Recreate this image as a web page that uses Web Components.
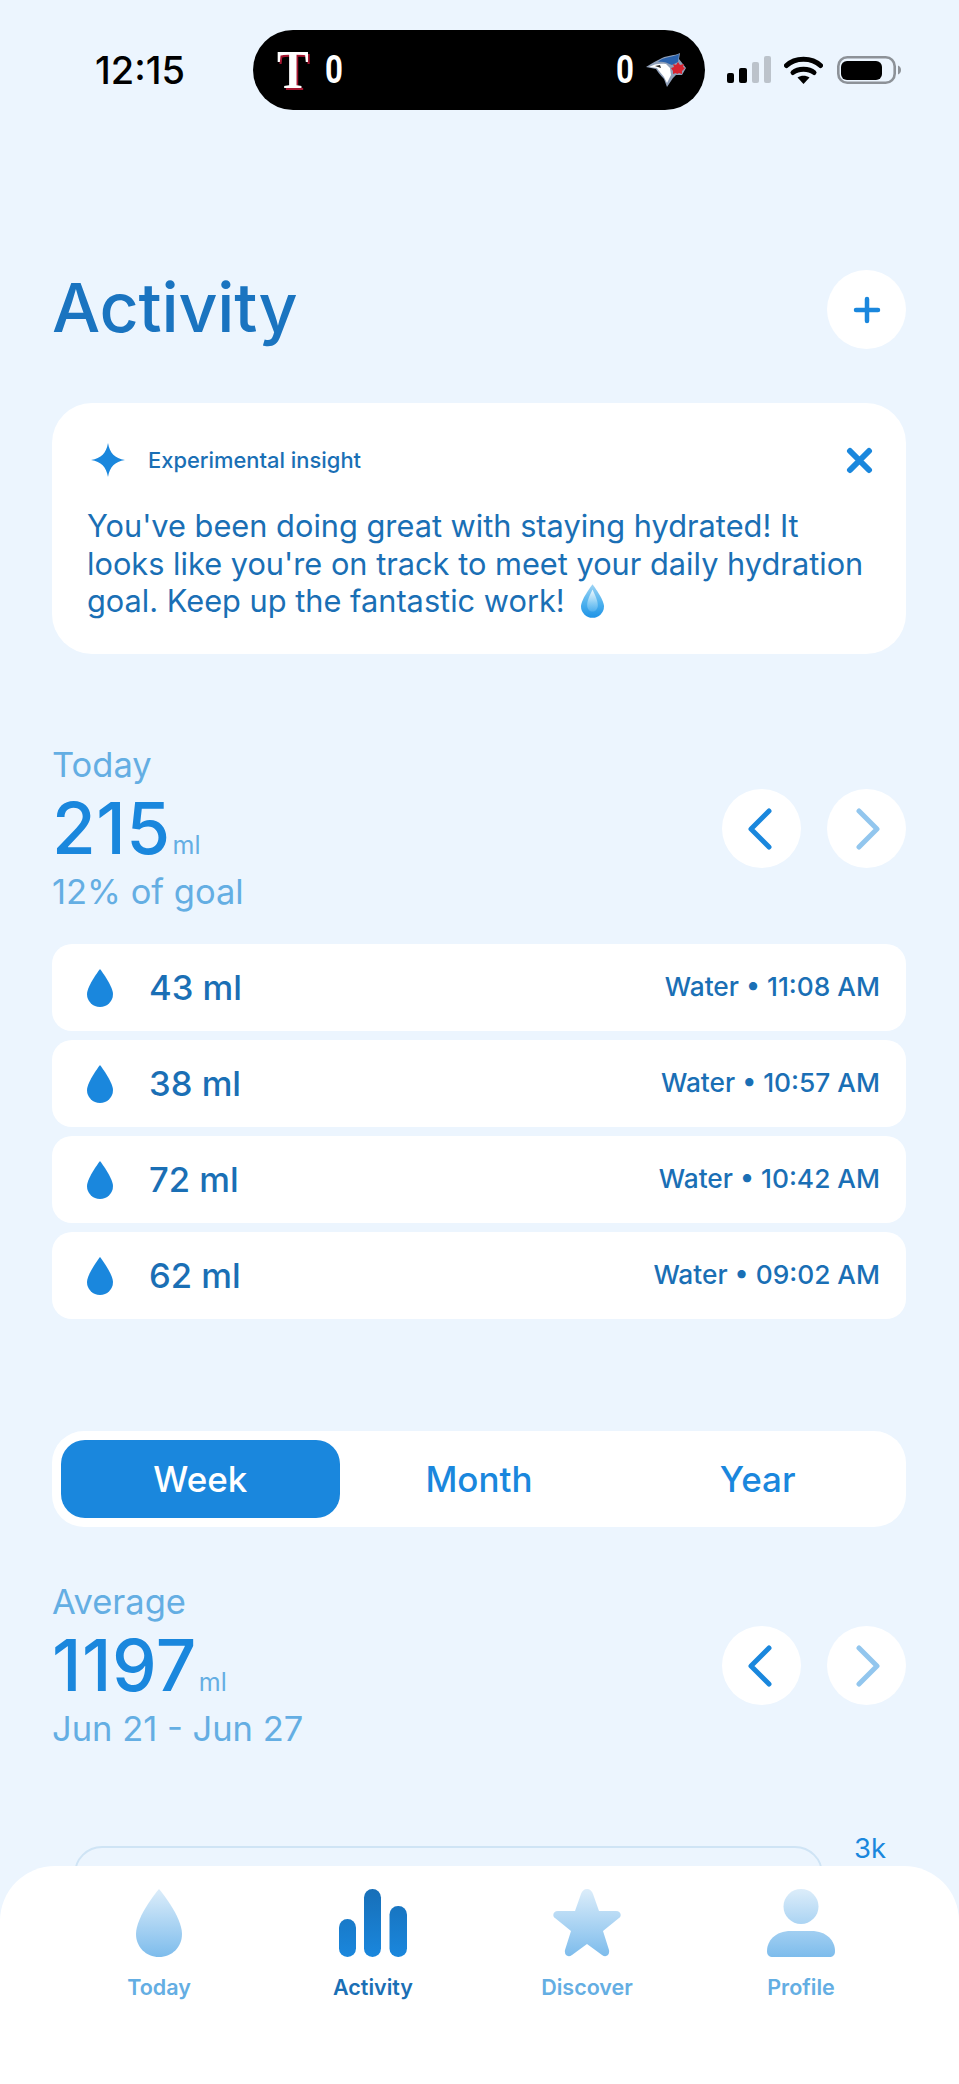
<!DOCTYPE html>
<html lang="en">
<head>
<meta charset="utf-8">
<title>Activity</title>
<style>
  html, body { margin: 0; background: #ecf5fe; }
  body { height: 2084px; overflow: hidden; font-family: Inter, "Liberation Sans", sans-serif; color: #1a6fb5; }
</style>
</head>
<body>
<activity-page>
  <status-bar></status-bar>
  <page-title>Activity</page-title>
  <insight-card>You've been doing great with staying hydrated! It looks like you're on track to meet your daily hydration goal. Keep up the fantastic work! </insight-card>
  <stat-block class="today" label="Today" value="215" unit="ml" note="12% of goal"></stat-block>
  <intake-list>
    <intake-row amount="43 ml" info="Water • 11:08 AM"></intake-row>
    <intake-row amount="38 ml" info="Water • 10:57 AM"></intake-row>
    <intake-row amount="72 ml" info="Water • 10:42 AM"></intake-row>
    <intake-row amount="62 ml" info="Water • 09:02 AM"></intake-row>
  </intake-list>
  <range-tabs></range-tabs>
  <stat-block class="average" label="Average" value="1197" unit="ml" note="Jun 21 - Jun 27"></stat-block>
  <chart-stub></chart-stub>
</activity-page>
<tab-bar></tab-bar>

<script>
// Iconos que se repiten en varios componentes
const GOTA = 'M13 0C13 0 0 17 0 25a13 13 0 0 0 26 0C26 17 13 0 13 0Z';

function crear(nombre, html) {
  customElements.define(nombre, class extends HTMLElement {
    constructor() {
      super();
      this.attachShadow({mode: 'open'});
    }
    connectedCallback() {
      this.shadowRoot.innerHTML = typeof html === 'function' ? html(this) : html;
    }
  });
}

crear('activity-page', `
  <style>
    :host { display: flex; flex-direction: column; padding: 0 53px 0 52px; height: 2084px; box-sizing: border-box; overflow: hidden; }
  </style>
  <slot></slot>
`);

// Barra de estado con el marcador del partido
crear('status-bar', `
  <style>
    :host { display: flex; align-items: center; height: 80px; margin: 30px -53px 0 -52px; padding: 0 0 0 95px; color: #000; }
    .hora { font: 500 38px/1 Inter, sans-serif; width: 158px; flex: none; }
    .isla { box-sizing: border-box; width: 452px; height: 80px; flex: none; border-radius: 40px; background: #000; color: #fff; display: flex; align-items: center; justify-content: space-between; padding: 0 19px 0 22px; }
    .lado { display: flex; align-items: center; gap: 16px; }
    .lado + .lado { gap: 12px; }
    .score { font: 700 39px/1 Roboto, sans-serif; transform: scaleX(.8); width: 20px; text-align: center; }
    .t { font: 700 54px/1 "Liberation Serif", serif; color: #fff; text-shadow: 2px 2px 0 #a5162f; width: 32px; text-align: center; transform: scaleX(.88); }
    .iconos { display: flex; align-items: center; margin-left: 22px; margin-top: -1px; }
    svg { display: block; }
  </style>
  <span class="hora">12:15</span>
  <div class="isla">
    <div class="lado"><span class="t">T</span><span class="score">0</span></div>
    <div class="lado">
      <span class="score">0</span>
      <svg width="40" height="34" viewBox="0 0 40 34">
        <path d="M0 14C6 10 12 7 16 5 22 2 28 3 34 0L33 6 40 15 36 22 30 22 27 25 21 34 18 26C14 22 11 18 10 16Z" fill="#8f9fb8"/>
        <path d="M12 9C18 3 26 5 33 1L32 9 26 12C20 9 16 8 12 9Z" fill="#2a62ad"/>
        <path d="M3 14C8 11 14 10 20 11L24 15 25 22 21 30 18 24C15 20 12 17 11 15Z" fill="#fff"/>
        <path d="M9 13 14 12 15 15Z" fill="#222"/>
        <path d="M32 9 34 12 38 11 37 14 39 15 36 18 36 21 33 20 31 21 30 20 27 21 27 18 25 15 28 14 27 11 30 12Z" fill="#d8232f"/>
      </svg>
    </div>
  </div>
  <div class="iconos">
    <svg width="44" height="27" viewBox="0 0 44 27">
      <rect x="0" y="17" width="7" height="10" rx="2" fill="#000"/>
      <rect x="12" y="12" width="8" height="15" rx="2" fill="#000"/>
      <rect x="25" y="6" width="7" height="21" rx="2" fill="#bcc3cb"/>
      <rect x="37" y="0" width="7" height="27" rx="2" fill="#bcc3cb"/>
    </svg>
    <svg width="39" height="28" viewBox="0 0 39 28" style="margin-left:13px">
      <path d="M2.500 9.500C11 1 28 1 36.500 9.500" fill="none" stroke="#000" stroke-width="5" stroke-linecap="round"/>
      <path d="M9 16.500C14 12 25 12 30 16.500" fill="none" stroke="#000" stroke-width="5" stroke-linecap="round"/>
      <path d="M13.500 21.500C17 19 22 19 25.500 21.500L19.500 28Z" fill="#000"/>
    </svg>
    <svg width="65" height="28" viewBox="0 0 65 28" style="margin-left:14px">
      <rect x="1.300" y="1.300" width="56.400" height="25.400" rx="9" fill="none" stroke="#8d9298" stroke-width="2.600"/>
      <rect x="4" y="5" width="41" height="19" rx="6" fill="#000"/>
      <path d="M61 9.500C65 10.500 65 17.500 61 18.500Z" fill="#8d9298"/>
    </svg>
  </div>
`);

crear('round-btn', `
  <style>
    :host { display: flex; align-items: center; justify-content: center; width: 79px; height: 79px; border-radius: 50%; background: #fff; flex: none; }
  </style>
  <slot></slot>
`);

crear('page-title', `
  <style>
    :host { display: flex; align-items: center; justify-content: space-between; height: 79px; margin-top: 160px; font: 450 68px/79px Inter, sans-serif; letter-spacing: -.2px; color: #1a74c0; }
    svg { display: block; }
    .txt { margin-top: -4px; }
  </style>
  <span class="txt"><slot></slot></span>
  <round-btn>
    <svg width="28" height="28" viewBox="0 0 28 28"><path d="M14 3V25M3 14H25" stroke="#1a87dd" stroke-width="4.500" stroke-linecap="round"/></svg>
  </round-btn>
`);

crear('insight-card', `
  <style>
    :host { display: block; box-sizing: border-box; height: 251px; margin-top: 54px; padding: 37px 33px 0 35px; background: #fff; border-radius: 40px; }
    .cab { display: flex; align-items: center; height: 40px; font: 550 21.9px/40px Inter, sans-serif; color: #1a6fb5; }
    .cab span { margin-left: 23px; flex: 1; }
    .estrella { margin-left: 4px; }
    .txt { margin-top: 27px; font: 400 30.75px/37.5px Inter, sans-serif; color: #1a6fb5; width: 795px; }
    svg { display: block; }
    .gota { display: inline-block; vertical-align: -7px; margin-left: 8px; }
  </style>
  <div class="cab">
    <svg class="estrella" width="34" height="34" viewBox="0 0 36 36"><path d="M18 0C20 11 25 16 36 18 25 20 20 25 18 36 16 25 11 20 0 18 11 16 16 11 18 0Z" fill="#1a87dd"/></svg>
    <span>Experimental insight</span>
    <svg width="27" height="27" viewBox="0 0 27 27"><path d="M4 4 23 23M23 4 4 23" stroke="#1a87dd" stroke-width="6" stroke-linecap="round"/></svg>
  </div>
  <div class="txt"><slot></slot><svg class="gota" width="23" height="36" viewBox="0 0 26 38">
    <defs>
      <linearGradient id="g" x1="0" y1="0" x2="0" y2="1"><stop offset="0" stop-color="#9fd4f4"/><stop offset=".55" stop-color="#4fb2ee"/><stop offset="1" stop-color="#1f93e6"/></linearGradient>
      <linearGradient id="h" x1="0" y1="0" x2="0" y2="1"><stop offset="0" stop-color="#f2fafe"/><stop offset="1" stop-color="#8fd2f6" stop-opacity=".3"/></linearGradient>
    </defs>
    <path d="${GOTA}" fill="url(#g)"/>
    <path d="M13 6C10 13 7 18 7 24 7 28 10 31 13 31S19 28 19 24C19 18 16 13 13 6Z" fill="url(#h)"/>
  </svg></div>
`);

const CHEVRONES = `
  <round-btn><svg style="margin-right:4px" width="24" height="42" viewBox="0 0 24 42"><path d="M21 3 3 21 21 39" fill="none" stroke="#1a87dd" stroke-width="5" stroke-linecap="round" stroke-linejoin="round"/></svg></round-btn>
  <round-btn><svg style="margin-left:3px" width="24" height="42" viewBox="0 0 24 42"><path d="M3 3 21 21 3 39" fill="none" stroke="#92c6ee" stroke-width="5" stroke-linecap="round" stroke-linejoin="round"/></svg></round-btn>
`;

crear('stat-block', (el) => `
  <style>
    :host { display: flex; justify-content: space-between; align-items: center; height: 169px; }
    :host(.today) { margin-top: 90px; }
    :host(.average) { margin-top: 54px; }
    .etq, .nota { font: 400 34.5px/42px Inter, sans-serif; color: #64aee3; }
    .num { font: 500 71px/85px Inter, sans-serif; letter-spacing: .5px; color: #1a87dd; height: 85px; }
    .num small { font: 400 25px/1 Inter, sans-serif; letter-spacing: 0; color: #64aee3; margin-left: 2px; }
    .bts { display: flex; gap: 26px; }
  </style>
  <div>
    <div class="etq">${el.getAttribute('label')}</div>
    <div class="num">${el.getAttribute('value')}<small>${el.getAttribute('unit')}</small></div>
    <div class="nota">${el.getAttribute('note')}</div>
  </div>
  <div class="bts">${CHEVRONES}</div>
`);

crear('intake-list', `
  <style>
    :host { display: flex; flex-direction: column; gap: 9px; margin-top: 31px; }
  </style>
  <slot></slot>
`);

crear('intake-row', (el) => `
  <style>
    :host { display: flex; align-items: center; height: 87px; padding: 0 26px 0 35px; background: #fff; border-radius: 20px; }
    svg { flex: none; }
    .cant { margin-left: 36px; flex: 1; font: 450 34.6px/1 Inter, sans-serif; color: #1a6fb5; }
    .info { font: 550 26.3px/1 Inter, sans-serif; color: #1a6fb5; }
  </style>
  <svg width="26" height="38" viewBox="0 0 26 38"><path d="${GOTA}" fill="#1a87dd"/></svg>
  <span class="cant">${el.getAttribute('amount')}</span>
  <span class="info">${el.getAttribute('info')}</span>
`);

crear('range-tabs', `
  <style>
    :host { display: grid; grid-template-columns: repeat(3, 1fr); box-sizing: border-box; height: 96px; margin-top: 112px; padding: 9px; background: #fff; border-radius: 32px; }
    div { display: flex; align-items: center; justify-content: center; border-radius: 24px; font: 450 35px/1 Inter, sans-serif; color: #1a87dd; }
    .on { background: #1a87dd; color: #fff; }
  </style>
  <div class="on">Week</div><div>Month</div><div>Year</div>
`);

crear('chart-stub', `
  <style>
    :host { display: flex; margin-top: 96px; height: 100px; margin-left: 22px; }
    .caja { width: 749px; height: 100px; box-sizing: border-box; border: 2px solid #cfe4f5; border-radius: 28px; flex: none; }
    .eje { margin-left: 31px; font: 400 27.5px/30px Inter, sans-serif; color: #1a87dd; margin-top: -13px; }
  </style>
  <div class="caja"></div><div class="eje">3k</div>
`);

// Barra inferior: se superpone al gráfico
const TONO = '<stop offset="0" stop-color="#dcedfa"/><stop offset="1" stop-color="#7dbcec"/>';
crear('tab-bar', `
  <style>
    :host { position: absolute; left: 0; right: 0; top: 1866px; height: 218px; display: grid; grid-template-columns: repeat(4, 1fr); padding: 23px 51px 0 52px; box-sizing: border-box; background: #fff; border-radius: 55px 55px 0 0; }
    svg { display: block; }
  </style>
  <tab-item label="Today"><svg width="46" height="68" viewBox="0 0 46 68"><defs><linearGradient id="t1" x1="0" y1="0" x2="0" y2="1">${TONO}</linearGradient></defs><path d="M23 0C23 0 0 27 0 45 0 58 10 68 23 68S46 58 46 45C46 27 23 0 23 0Z" fill="url(#t1)"/></svg></tab-item>
  <tab-item label="Activity" class="on"><svg width="68" height="68" viewBox="0 0 68 68"><defs><linearGradient id="t2" gradientUnits="userSpaceOnUse" x1="0" y1="0" x2="0" y2="68"><stop offset="0" stop-color="#176fb8"/><stop offset="1" stop-color="#1a87dd"/></linearGradient></defs><g fill="url(#t2)"><rect x="0" y="30" width="17" height="38" rx="8.500"/><rect x="25" y="0" width="17" height="68" rx="8.500"/><rect x="50.500" y="17" width="17.500" height="51" rx="8.500"/></g></svg></tab-item>
  <tab-item label="Discover"><svg width="68" height="68" viewBox="0 0 68 68"><defs><linearGradient id="t3" x1="0" y1="0" x2="0" y2="1">${TONO}</linearGradient></defs><path d="M34 0C37 0 39 2 40 5L46 22H63C68 22 69 27 66 29L50 42 56 61C57 66 53 69 49 66L34 55 19 66C15 69 11 66 12 61L18 42 2 29C-1 27 0 22 5 22H22L28 5C29 2 31 0 34 0Z" fill="url(#t3)"/></svg></tab-item>
  <tab-item label="Profile"><svg width="68" height="68" viewBox="0 0 68 68"><defs><linearGradient id="t4" gradientUnits="userSpaceOnUse" x1="0" y1="0" x2="0" y2="68">${TONO}</linearGradient></defs><g fill="url(#t4)"><circle cx="34" cy="17.500" r="17.500"/><path d="M0 62C0 52 8 42 24 42H44C60 42 68 52 68 62 68 66 66 68 62 68H6C2 68 0 66 0 62Z"/></g></svg></tab-item>
`);

crear('tab-item', (el) => `
  <style>
    :host { display: flex; flex-direction: column; align-items: center; font: 600 21.5px/1 Inter, sans-serif; color: #64aee3; }
    :host(.on) { color: #1a6fb5; }
    span { margin-top: 20px; }
  </style>
  <slot></slot>
  <span>${el.getAttribute('label')}</span>
`);
</script>
</body>
</html>
